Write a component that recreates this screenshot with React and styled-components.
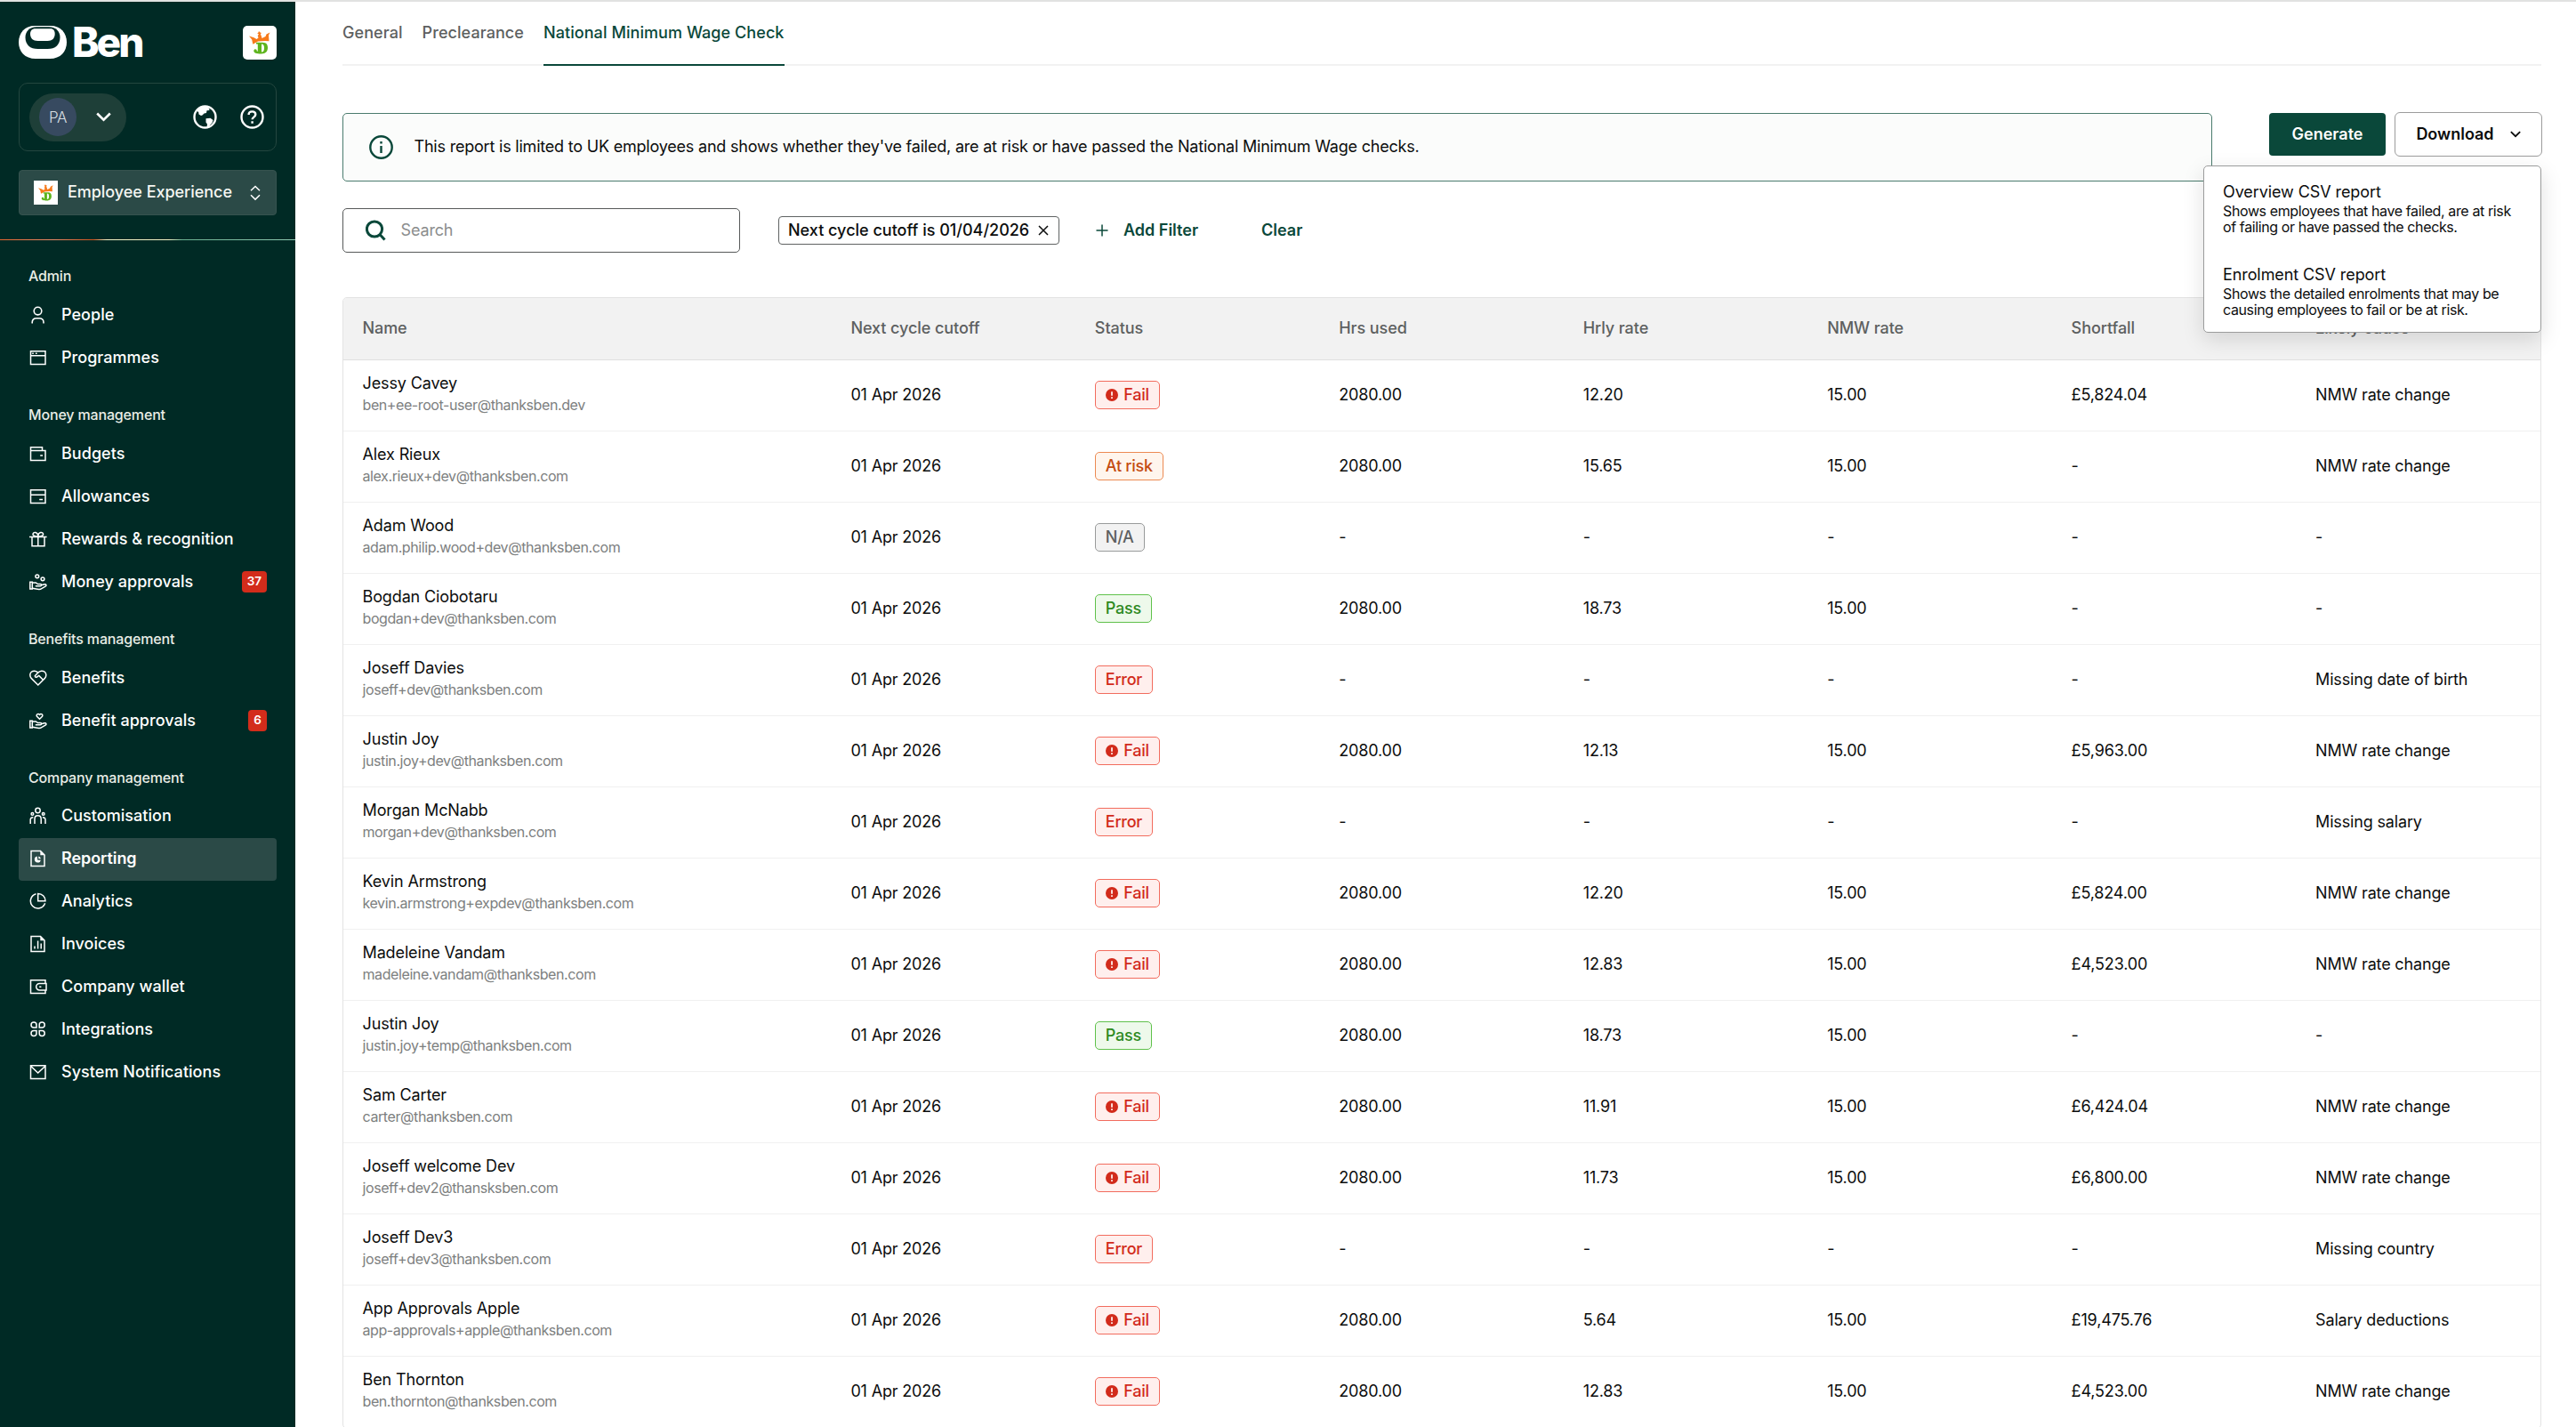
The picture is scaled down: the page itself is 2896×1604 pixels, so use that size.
import React from 'react';
import styled, { createGlobalStyle } from 'styled-components';

const GlobalStyle = createGlobalStyle`
  * { box-sizing: border-box; }
  body { margin: 0; background: #fff; overflow: hidden; }
  button, input { font: inherit; letter-spacing: inherit; }
  svg { display: block; flex: none; }
`;

const Page = styled.div`
  width: 2896px;
  height: 1604px;
  overflow: hidden;
  display: flex;
  border-top: 2px solid #e1e2e1;
  font-family: Inter, "Liberation Sans", sans-serif;
  font-size: 18px;
  line-height: 24px;
  color: #0c0d0d;
`;

/* ---------- Sidebar ---------- */

const Sidebar = styled.aside`
  width: 332px;
  flex: none;
  background: #002a25;
  color: #fff;
`;

const SidebarTop = styled.div`
  height: 267px;
  padding: 27px 21px 0;
`;

const BrandRow = styled.div`
  display: flex;
  justify-content: space-between;
  align-items: center;
  height: 37px;
`;

const Brand = styled.div`
  display: flex;
  align-items: center;
  gap: 5px;
`;

const BrandName = styled.span`
  font-size: 46px;
  line-height: 37px;
  font-weight: 800;
  letter-spacing: -0.065em;
`;

const CompanyTile = styled.div`
  width: ${(p) => p.$size}px;
  height: ${(p) => p.$size}px;
  border-radius: ${(p) => p.$radius}px;
  background: #fff;
  display: grid;
  place-items: center;
  flex: none;
`;

const ProfileBox = styled.div`
  margin-top: 27px;
  height: 77px;
  border: 1px solid #24463f;
  border-radius: 10px;
  display: flex;
  align-items: center;
  padding: 0 13px 0 11px;
`;

const ProfilePill = styled.div`
  width: 109px;
  height: 54px;
  border-radius: 27px;
  background: #1e3f38;
  display: flex;
  align-items: center;
  justify-content: space-between;
  padding: 0 17px 0 11px;
  margin-right: auto;
`;

const Avatar = styled.span`
  width: 42px;
  height: 43px;
  border-radius: 50%;
  background: #374a60;
  color: #d9dfe2;
  font-size: 17px;
  font-weight: 300;
  letter-spacing: -0.03em;
  display: grid;
  place-items: center;
`;

const HeaderIcons = styled.div`
  display: flex;
  gap: 26px;
`;

const Switcher = styled.div`
  margin-top: 21px;
  height: 51px;
  border: 1px solid #36534f;
  border-radius: 4px;
  background: #2b4a47;
  display: flex;
  align-items: center;
  padding: 0 17px 0 16px;
`;

const SwitcherLabel = styled.span`
  margin-left: 11px;
  margin-right: auto;
  padding-bottom: 2px;
  font-weight: 500;
  letter-spacing: -0.002em;
  color: #f4f6f2;
  white-space: nowrap;
`;

const Rainbow = styled.div`
  height: 1px;
  background: linear-gradient(90deg, #e8662f 0, #e88a68 60px, #d4541c 105px, #f3efc4 120px, #f3efc4 190px, #6cb293 205px, #8fc9b2 332px);
`;

const NavGroup = styled.div`
  padding: 0 21px;
`;

const NavHeading = styled.h3`
  margin: 0;
  height: ${(p) => p.$height || 60}px;
  padding: ${(p) => (p.$height === 61 ? 28 : 27)}px 11px 0;
  font-size: 16px;
  font-weight: 500;
  letter-spacing: -0.01em;
  color: #e9ede6;
`;

const NavItem = styled.div`
  height: 48px;
  border-radius: 4px;
  background: ${(p) => (p.$active ? '#2b4a47' : 'transparent')};
  display: flex;
  align-items: center;
  padding: 0 11px 3px 12px;
  font-weight: ${(p) => (p.$active ? 600 : 500)};
  letter-spacing: ${(p) => (p.$active ? '-0.004em' : '0.002em')};
`;

const NavLabel = styled.span`
  margin-left: 16px;
  margin-right: auto;
  white-space: nowrap;
`;

const CountBadge = styled.span`
  height: 24px;
  padding: 0 6px;
  border-radius: 4px;
  background: #d32c1b;
  font-size: 13.5px;
  font-weight: 600;
  line-height: 23px;
  letter-spacing: 0;
`;

/* ---------- Main ---------- */

const Main = styled.main`
  flex: 1;
  min-width: 0;
  padding: 0 39px 0 53px;
`;

const Tabs = styled.nav`
  height: 72px;
  display: flex;
  gap: 22px;
  box-shadow: inset 0 -2px 0 #f2f2f2;
`;

const Tab = styled.a`
  padding-top: 23px;
  border-bottom: 2px solid ${(p) => (p.$active ? '#0a483a' : 'transparent')};
  color: ${(p) => (p.$active ? '#0a483a' : '#5d6060')};
  font-weight: 500;
  letter-spacing: 0.004em;
  white-space: nowrap;
`;

const ReportBar = styled.section`
  margin-top: 53px;
  display: flex;
  align-items: flex-start;
  justify-content: space-between;
`;

const Banner = styled.div`
  width: 2102px;
  height: 77px;
  border: 1px solid #4a7b6d;
  border-radius: 5px;
  background: #fbfcfb;
  display: flex;
  align-items: center;
  gap: 23.5px;
  padding: 0 0 1px 29px;
  letter-spacing: -0.0115em;
`;

const Actions = styled.div`
  display: flex;
  gap: 10px;
  position: relative;
`;

const Button = styled.button`
  height: ${(p) => (p.$primary ? 48 : 50)}px;
  width: ${(p) => (p.$primary ? 131 : 166)}px;
  margin: ${(p) => (p.$primary ? '0' : '-1px -1px 0 0')};
  border-radius: ${(p) => (p.$primary ? 4 : 6)}px;
  border: ${(p) => (p.$primary ? '0' : '1px solid #9c9c9c')};
  background: ${(p) => (p.$primary ? '#0a483a' : '#fff')};
  color: ${(p) => (p.$primary ? '#fff' : '#0c0d0d')};
  font-weight: 600;
  letter-spacing: 0;
  display: flex;
  align-items: center;
  justify-content: center;
  gap: 18px;
  padding: 0;
`;

const Menu = styled.div`
  position: absolute;
  top: 59px;
  right: 0;
  width: 380px;
  height: 188px;
  padding: 17px 21px 0;
  border: 1px solid #9b9c9c;
  border-radius: 5px;
  background: #fff;
  box-shadow: 0 8px 24px rgba(0, 0, 0, 0.13);
  display: flex;
  flex-direction: column;
  gap: 33px;
  z-index: 2;
`;

const MenuTitle = styled.div`
  letter-spacing: -0.005em;
`;

const MenuText = styled.div`
  font-size: 16px;
  line-height: 18px;
  letter-spacing: -0.024em;
  white-space: pre;
`;

const FilterBar = styled.section`
  margin-top: 30px;
  height: 50px;
  display: flex;
  align-items: center;
`;

const SearchBox = styled.label`
  width: 447px;
  height: 50px;
  border: 1px solid #565959;
  border-radius: 5px;
  display: flex;
  align-items: center;
  gap: 16.5px;
  padding-left: 25px;
  color: #8b8d8d;
  letter-spacing: -0.008em;
`;

const Chip = styled.div`
  margin-left: 43px;
  width: 316px;
  height: 32px;
  border: 1px solid #5f6262;
  border-radius: 4px;
  display: flex;
  align-items: center;
  justify-content: space-between;
  padding: 0 11px 0 10px;
  font-weight: 500;
  letter-spacing: 0;
  white-space: nowrap;
`;

const LinkButton = styled.span`
  margin-left: ${(p) => p.$left}px;
  display: flex;
  align-items: center;
  gap: 17px;
  color: #0a483a;
  font-weight: 600;
  letter-spacing: 0;
  white-space: nowrap;
`;

/* ---------- Table ---------- */

const Table = styled.div`
  margin-top: 50px;
  width: 2472px;
  border: 1px solid #e3e3e3;
  border-radius: 5px;
  overflow: hidden;
`;

const Row = styled.div`
  display: grid;
  grid-template-columns: 2fr repeat(7, 1fr);
  align-items: center;
  height: 80px;
  padding-bottom: 2px;
  border-bottom: 1px solid #f0f0f0;
  letter-spacing: -0.009em;
`;

const HeadRow = styled(Row)`
  height: 70px;
  background: #f2f2f2;
  border-bottom: 1px solid #e0e0e0;
  color: #5d6060;
  font-weight: 500;
  letter-spacing: -0.004em;
`;

const Cell = styled.div`
  padding-left: 21.5px;
  white-space: nowrap;
`;

const PersonName = styled.div`
  letter-spacing: -0.007em;
`;

const Email = styled.div`
  font-size: 16px;
  line-height: 25px;
  color: #7d8080;
  letter-spacing: -0.0255em;
`;

const tones = {
  Fail: { bg: '#ffefed', line: '#f26c5e', ink: '#d22b1b' },
  'At risk': { bg: '#fff5ed', line: '#ec8a52', ink: '#c44b12' },
  'N/A': { bg: '#f2f2f2', line: '#999b9b', ink: '#5d6060' },
  Pass: { bg: '#eef9eb', line: '#5fc14b', ink: '#2f8a1f' },
  Error: { bg: '#ffefed', line: '#f26c5e', ink: '#d22b1b' },
};

const Status = styled.span`
  display: inline-flex;
  align-items: center;
  gap: 6.5px;
  height: 32px;
  padding: 0 11px;
  border: 1px solid ${(p) => tones[p.$kind].line};
  border-radius: 5px;
  background: ${(p) => tones[p.$kind].bg};
  color: ${(p) => tones[p.$kind].ink};
  font-weight: 500;
  letter-spacing: -0.015em;
  vertical-align: middle;
`;

/* ---------- Drawings ---------- */

const RingLogo = () => (
  <svg width="55" height="37" viewBox="0 0 55 37">
    <path d="M18 0H36C47 0 54 8 54 18.5S47 37 35 37H19C7 37 0 29 0 18.500S7 0 18 0Z" fill="#fff" />
    <path d="M20 1.300H34C42 1.300 46.500 6.500 46.500 13C46.500 21.500 41 26 32.500 26H21.500C13 26 7.500 21.500 7.500 13C7.500 6.500 12 1.300 20 1.300Z" fill="#002a25" />
    <path d="M18.500 3.200H36C39 3.200 40.700 5.500 40.700 9C40.700 14 37.500 17 32.500 17H21.500C16 17 13 14 13 9C13 5.500 15 3.200 18.500 3.200Z" fill="#fff" />
  </svg>
);

const CrownLogo = ({ size }) => (
  <svg width={size} height={size} viewBox="0 0 38 38">
    <path d="M11.300 20.800L10.200 15.500 7 11.500 12.500 13.200 15.500 15 17.500 13.500 16.700 11 18 9.500 16.200 8.500 17.500 7.500 18 6 19.500 7.400 21 8 19.800 9.300 20.800 11.500 21.500 14 25.500 12 26.500 9.500 30.500 7.500 29 10.500 29.500 17.200 25 17 17 17.600Z" fill="#f77a1b" />
    <path fillRule="evenodd" d="M15 18.700H22C27 18.700 28 21.500 28 24.500C28 28.500 26 31.500 20.500 31.500C15.500 31.500 12 30.500 12.300 28C12.600 25.500 16 26 15.700 28.200L16.800 28.700V20.500H15ZM21 20.500V29.600C23 29.600 24 28 24 25C24 22 23.200 20.500 21 20.500Z" fill="#5eb41e" />
  </svg>
);

const Stroke = ({ size = 20, w = 1.5, color = 'currentColor', children, box = 20 }) => (
  <svg width={size} height={size} viewBox={`0 0 ${box} ${box}`} fill="none" stroke={color} strokeWidth={w}>
    {children}
  </svg>
);

const Hand = () => (
  <>
    <path d="M.8 10.200H3.300V18H.8Z" />
    <path d="M3.300 11H7.300L9.500 12.600H12.400C14 12.600 14 14.700 12.400 14.700H6.800M13.300 13.800L17 12.800C19 12.300 19.600 14.200 18 15.200L12.500 18.300C9.500 18.800 6.500 18 3.300 17.200" />
  </>
);

const Doc = ({ children }) => (
  <Stroke>
    <path d="M2 1.500H12.500L17 6V18.500H2Z" />
    <path d="M12.300 1.200V6.300H17.400Z" fill="currentColor" stroke="none" />
    {children}
  </Stroke>
);

const icons = {
  people: (
    <Stroke w={1.600}>
      <circle cx="9.500" cy="5.600" r="4.300" />
      <path d="M3.200 19.500V18.200C3.200 15.500 5.200 13.700 7.800 13.700H11.200C13.800 13.700 16 15.500 16 18.200V19.500" />
    </Stroke>
  ),
  programmes: (
    <Stroke>
      <path d="M1.500 2.700H18V17.600H1.500ZM1.500 7.800H18" />
      <path d="M3.200 5.300H4.800M7 5.300H8.600" />
    </Stroke>
  ),
  budgets: (
    <Stroke>
      <path d="M1.500 6.400V2.700H14.500V6.400M1.500 6.400H18V17.600H1.500ZM12.200 12H15" />
    </Stroke>
  ),
  allowances: (
    <Stroke>
      <path d="M1.500 2.700H18V17.600H1.500ZM1.500 8.300H18M11.200 13.600H15" />
    </Stroke>
  ),
  rewards: (
    <Stroke>
      <path d="M0 7.600H19.600M3 7.600V17.800H17V7.600M9.800 7.600V17.800" />
      <path d="M9.800 7.300C8.800 6.800 4 7.400 4 4.600C4 1.300 9.800 1.500 9.800 7.300ZM9.800 7.300C10.800 6.800 15.600 7.400 15.600 4.600C15.600 1.300 9.800 1.500 9.800 7.300Z" />
    </Stroke>
  ),
  money: (
    <Stroke>
      <circle cx="8.800" cy="3.800" r="1.900" />
      <circle cx="15" cy="6.800" r="1.900" />
      <Hand />
    </Stroke>
  ),
  benefits: (
    <Stroke>
      <path d="M9.800 18L2.200 10.400C.2 8.200.4 4.900 2.300 3.300C4.400 1.500 7.800 1.800 9.800 4.100C11.800 1.800 15.200 1.500 17.300 3.300C19.200 4.900 19.400 8.200 17.400 10.400Z" />
      <path d="M9.800 4.100L6.300 7.800C6.500 9.600 8.300 9.500 9.600 8.200L10.800 7.400L15.300 12.100" />
    </Stroke>
  ),
  benefitApprovals: (
    <Stroke>
      <path d="M11.500 8.200L8.500 5.200C7.200 3.400 9.800 1.300 11.500 3.400C13.200 1.300 15.800 3.400 14.500 5.200Z" />
      <Hand />
    </Stroke>
  ),
  customisation: (
    <Stroke>
      <circle cx="9.500" cy="4" r="2.700" />
      <circle cx="3.400" cy="7.900" r="1.300" />
      <circle cx="15.700" cy="7.900" r="1.300" />
      <path d="M6 19V13.500C6 11.200 7.200 9.800 9.500 9.800S13.200 11.200 13.200 13.500V19M1.200 19V14.300C1.200 12.600 2 11.700 4.300 11.700M18 19V14.300C18 12.600 17.200 11.700 14.900 11.700" />
    </Stroke>
  ),
  reporting: (
    <Doc>
      <path d="M8.700 7.600A3.500 3.500 0 1 0 12.800 11.700H9.300Z" fill="currentColor" stroke="none" />
      <path d="M10.300 7.400A3.500 3.500 0 0 1 12.900 10.300H10.300Z" fill="currentColor" stroke="none" />
    </Doc>
  ),
  analytics: (
    <Stroke>
      <path d="M7.500 1.700A8.300 8.300 0 1 0 17.600 12.200" />
      <path d="M9.700 1.400V9.700H18A8.300 8.300 0 0 0 9.700 1.400Z" />
    </Stroke>
  ),
  invoices: (
    <Doc>
      <path d="M6 15.500V12.500M9.600 15.500V6.500M13.200 15.500V9.500" />
    </Doc>
  ),
  wallet: (
    <Stroke>
      <path d="M18 6.300V2.700H1.500V17.600H18V14" />
      <path d="M19 6.400H11.500A3.800 3.800 0 0 0 11.500 14H19ZM11.200 10.200H13.400" />
    </Stroke>
  ),
  integrations: (
    <Stroke>
      <path d="M8 8V5A3 3 0 1 0 5 8ZM11.200 8V5A3 3 0 1 1 14.200 8ZM8 11.500V14.500A3 3 0 1 1 5 11.500ZM11.200 11.500V14.500A3 3 0 1 0 14.200 11.500Z" />
    </Stroke>
  ),
  mail: (
    <Stroke>
      <path d="M1.500 2.700H18V17.600H1.500ZM1.500 3.200L9.700 11L18 3.200" />
    </Stroke>
  ),
};

const GlobeIcon = () => (
  <svg width="27" height="27" viewBox="0 0 27 27">
    <circle cx="13.500" cy="13.500" r="12" fill="none" stroke="#fff" strokeWidth="2.400" />
    <path d="M4 6.500L8 3L14 1.500L18 3.500L18.500 6L15.500 6.300L15 9L12.500 9.500L10.500 11.500L9 12L6.500 10.500L6.200 8Z" fill="#fff" />
    <path d="M14.500 15.200L19.500 14.800L22.500 17L21.500 20L17 25H15.500L16 21.500L14.500 19.500Z" fill="#fff" />
  </svg>
);

const HelpIcon = () => (
  <svg width="27" height="27" viewBox="0 0 27 27" fill="none" stroke="#fff" strokeWidth="2.400">
    <circle cx="13.500" cy="13.500" r="12" />
    <path d="M9.600 11C9.600 8.700 11.200 7.400 13.500 7.400S17.300 8.700 17.300 10.800C17.300 13.600 13.600 13.600 13.600 16.300M13.600 18.300V20.700" />
  </svg>
);

const ChevronDown = ({ width, w }) => (
  <svg width={width} height={width * 0.62} viewBox="0 0 17 10.500" fill="none" stroke="currentColor" strokeWidth={w}>
    <path d="M1.200 1.500L8.500 8.700L15.800 1.500" />
  </svg>
);

const UpDown = () => (
  <svg width="12" height="18" viewBox="0 0 12 18" fill="none" stroke="#fff" strokeWidth="1.500">
    <path d="M1 6.300L6 1.500L11 6.300M1 11.300L6 16.100L11 11.300" />
  </svg>
);

const InfoIcon = () => (
  <svg width="27" height="27" viewBox="0 0 27 27" fill="none" stroke="#0a483a" strokeWidth="2.400">
    <circle cx="13.500" cy="13.500" r="12.200" />
    <path d="M13.500 12V20M13.500 7V9.600" />
  </svg>
);

const SearchIcon = () => (
  <svg width="23" height="24" viewBox="0 0 23 24" fill="none" stroke="#0a483a" strokeWidth="3">
    <circle cx="10" cy="10.500" r="8.600" />
    <path d="M15.500 16L21.500 22.500" />
  </svg>
);

const CloseIcon = () => (
  <svg width="12" height="12" viewBox="0 0 12 12" fill="none" stroke="#0c0d0d" strokeWidth="1.500">
    <path d="M1 1L11 11M11 1L1 11" />
  </svg>
);

const PlusIcon = () => (
  <svg width="14" height="14" viewBox="0 0 14 14" fill="none" stroke="#0a483a" strokeWidth="1.500">
    <path d="M7 .5V13.500M.5 7H13.500" />
  </svg>
);

const AlertIcon = () => (
  <svg width="14" height="14" viewBox="0 0 14 14">
    <circle cx="7" cy="7" r="7" fill="#d22b1b" />
    <path d="M7 3.200V7.800M7 9.200V11" stroke="#ffefed" strokeWidth="1.800" />
  </svg>
);

/* ---------- Data ---------- */

const nav = [
  { title: 'Admin', height: 61, items: [['people', 'People'], ['programmes', 'Programmes']] },
  {
    title: 'Money management',
    items: [
      ['budgets', 'Budgets'],
      ['allowances', 'Allowances'],
      ['rewards', 'Rewards & recognition'],
      ['money', 'Money approvals', 37],
    ],
  },
  { title: 'Benefits management', items: [['benefits', 'Benefits'], ['benefitApprovals', 'Benefit approvals', 6]] },
  {
    title: 'Company management',
    height: 59,
    items: [
      ['customisation', 'Customisation'],
      ['reporting', 'Reporting'],
      ['analytics', 'Analytics'],
      ['invoices', 'Invoices'],
      ['wallet', 'Company wallet'],
      ['integrations', 'Integrations'],
      ['mail', 'System Notifications'],
    ],
  },
];

const columns = ['Name', 'Next cycle cutoff', 'Status', 'Hrs used', 'Hrly rate', 'NMW rate', 'Shortfall', 'Likely cause'];

const rows = [
  ['Jessy Cavey', 'ben+ee-root-user@thanksben.dev', 'Fail', '2080.00', '12.20', '15.00', '£5,824.04', 'NMW rate change'],
  ['Alex Rieux', 'alex.rieux+dev@thanksben.com', 'At risk', '2080.00', '15.65', '15.00', '-', 'NMW rate change'],
  ['Adam Wood', 'adam.philip.wood+dev@thanksben.com', 'N/A', '-', '-', '-', '-', '-'],
  ['Bogdan Ciobotaru', 'bogdan+dev@thanksben.com', 'Pass', '2080.00', '18.73', '15.00', '-', '-'],
  ['Joseff Davies', 'joseff+dev@thanksben.com', 'Error', '-', '-', '-', '-', 'Missing date of birth'],
  ['Justin Joy', 'justin.joy+dev@thanksben.com', 'Fail', '2080.00', '12.13', '15.00', '£5,963.00', 'NMW rate change'],
  ['Morgan McNabb', 'morgan+dev@thanksben.com', 'Error', '-', '-', '-', '-', 'Missing salary'],
  ['Kevin Armstrong', 'kevin.armstrong+expdev@thanksben.com', 'Fail', '2080.00', '12.20', '15.00', '£5,824.00', 'NMW rate change'],
  ['Madeleine Vandam', 'madeleine.vandam@thanksben.com', 'Fail', '2080.00', '12.83', '15.00', '£4,523.00', 'NMW rate change'],
  ['Justin Joy', 'justin.joy+temp@thanksben.com', 'Pass', '2080.00', '18.73', '15.00', '-', '-'],
  ['Sam Carter', 'carter@thanksben.com', 'Fail', '2080.00', '11.91', '15.00', '£6,424.04', 'NMW rate change'],
  ['Joseff welcome Dev', 'joseff+dev2@thansksben.com', 'Fail', '2080.00', '11.73', '15.00', '£6,800.00', 'NMW rate change'],
  ['Joseff Dev3', 'joseff+dev3@thanksben.com', 'Error', '-', '-', '-', '-', 'Missing country'],
  ['App Approvals Apple', 'app-approvals+apple@thanksben.com', 'Fail', '2080.00', '5.64', '15.00', '£19,475.76', 'Salary deductions'],
  ['Ben Thornton', 'ben.thornton@thanksben.com', 'Fail', '2080.00', '12.83', '15.00', '£4,523.00', 'NMW rate change'],
];

export default function App() {
  return (
    <Page>
      <GlobalStyle />
      <Sidebar>
        <SidebarTop>
          <BrandRow>
            <Brand>
              <RingLogo />
              <BrandName>Ben</BrandName>
            </Brand>
            <CompanyTile $size={38} $radius={5}>
              <CrownLogo size={38} />
            </CompanyTile>
          </BrandRow>
          <ProfileBox>
            <ProfilePill>
              <Avatar>PA</Avatar>
              <ChevronDown width={17} w={2.6} />
            </ProfilePill>
            <HeaderIcons>
              <GlobeIcon />
              <HelpIcon />
            </HeaderIcons>
          </ProfileBox>
          <Switcher>
            <CompanyTile $size={27} $radius={0}>
              <CrownLogo size={27} />
            </CompanyTile>
            <SwitcherLabel>Employee Experience</SwitcherLabel>
            <UpDown />
          </Switcher>
        </SidebarTop>
        <Rainbow />
        {nav.map((group) => (
          <NavGroup key={group.title}>
            <NavHeading $height={group.height}>{group.title}</NavHeading>
            {group.items.map(([icon, label, count]) => (
              <NavItem key={label} $active={label === 'Reporting'}>
                {icons[icon]}
                <NavLabel>{label}</NavLabel>
                {count && <CountBadge>{count}</CountBadge>}
              </NavItem>
            ))}
          </NavGroup>
        ))}
      </Sidebar>
      <Main>
        <Tabs>
          <Tab>General</Tab>
          <Tab>Preclearance</Tab>
          <Tab $active>National Minimum Wage Check</Tab>
        </Tabs>
        <ReportBar>
          <Banner>
            <InfoIcon />
            <span>
              This report is limited to UK employees and shows whether they've failed, are at risk or have passed the
              National Minimum Wage checks.
            </span>
          </Banner>
          <Actions>
            <Button $primary>Generate</Button>
            <Button>
              Download
              <ChevronDown width={12} w={2.6} />
            </Button>
            <Menu>
              <div>
                <MenuTitle>Overview CSV report</MenuTitle>
                <MenuText>{'Shows employees that have failed, are at risk\nof failing or have passed the checks.'}</MenuText>
              </div>
              <div>
                <MenuTitle>Enrolment CSV report</MenuTitle>
                <MenuText>{'Shows the detailed enrolments that may be\ncausing employees to fail or be at risk.'}</MenuText>
              </div>
            </Menu>
          </Actions>
        </ReportBar>
        <FilterBar>
          <SearchBox>
            <SearchIcon />
            Search
          </SearchBox>
          <Chip>
            Next cycle cutoff is 01/04/2026
            <CloseIcon />
          </Chip>
          <LinkButton $left={41}>
            <PlusIcon />
            Add Filter
          </LinkButton>
          <LinkButton $left={71}>Clear</LinkButton>
        </FilterBar>
        <Table>
          <HeadRow>
            {columns.map((name) => (
              <Cell key={name}>{name}</Cell>
            ))}
          </HeadRow>
          {rows.map(([name, email, status, ...values]) => (
            <Row key={email}>
              <Cell>
                <PersonName>{name}</PersonName>
                <Email>{email}</Email>
              </Cell>
              <Cell>01 Apr 2026</Cell>
              <Cell>
                <Status $kind={status}>
                  {status === 'Fail' && <AlertIcon />}
                  {status}
                </Status>
              </Cell>
              {values.map((value, i) => (
                <Cell key={i}>{value}</Cell>
              ))}
            </Row>
          ))}
        </Table>
      </Main>
    </Page>
  );
}
